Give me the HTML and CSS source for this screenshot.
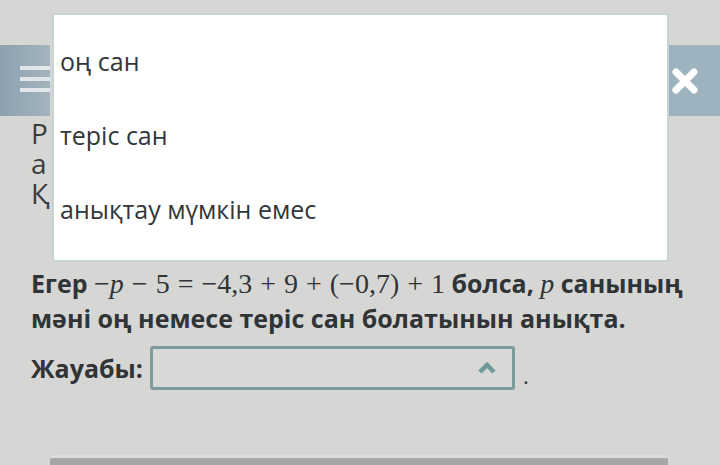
FILE: index.html
```html
<!DOCTYPE html>
<html>
<head>
    <title>Тапсырма</title>
    <meta charset="utf-8">
    <link rel="stylesheet" href="styles.css">
</head>
<body>
    <div class="page">
        <div class="topbar">
            <div class="menu-btn">
                <span></span>
                <span></span>
                <span></span>
            </div>
            <div class="close-btn">
                <svg width="28" height="28" viewBox="0 0 28 28">
                    <path d="M5 5 L23 23 M23 5 L5 23" stroke="#ffffff" stroke-width="7" stroke-linecap="round"/>
                </svg>
            </div>
        </div>

        <p class="intro">Рационал сандарға<br>амалдар қолдану<br>Қажетті нұсқаны</p>

        <p class="question">
            Егер <span class="math">−<i>p</i> − 5 = −4,3 + 9 + (−0,7) + 1</span> болса, <span class="math"><i>p</i></span> санының<br>
            мәні оң немесе теріс сан болатынын анықта.
        </p>

        <div class="answer">
            <label>Жауабы:</label>
            <div class="select">
                <svg class="chevron" width="18" height="14" viewBox="0 0 18 14">
                    <path d="M2 11 L9 4 L16 11" fill="none" stroke="#6e9899" stroke-width="4.5"/>
                </svg>
            </div>
            <span class="dot">.</span>
        </div>

        <div class="next-bar"></div>

        <!-- ашылған тізім -->
        <ul class="dropdown">
            <li>оң сан</li>
            <li>теріс сан</li>
            <li>анықтау мүмкін емес</li>
        </ul>
    </div>
</body>
</html>
```

FILE: styles.css
```css
body {
    margin: 0;
    background: #d6d7d5;
    font-family: "Open Sans", "Noto Sans", sans-serif;
    color: #303436;
    overflow: hidden;
}
.page {
    position: relative;
    height: 465px;
    padding-top: 45px;
    box-sizing: border-box;
    overflow: hidden;
}
.topbar {
    display: flex;
    justify-content: space-between;
    height: 71px;
}
.menu-btn {
    width: 50px;
    background: linear-gradient(to right, #8da1af, #a3b4be);
    display: flex;
    flex-direction: column;
    align-items: flex-end;
    padding-top: 21px;
    gap: 7px;
    box-sizing: border-box;
}
.menu-btn span {
    display: block;
    width: 30px;
    height: 4px;
    background: #e2e6e8;
}
.close-btn {
    width: 71px;
    background: #9db3c0;
    border-radius: 6px 0 0 6px;
    display: flex;
    align-items: center;
    justify-content: center;
}
.intro {
    margin: 2px 0 0 31px;
    font-size: 28px;
    line-height: 30px;
    letter-spacing: 4px;
    color: #3a3d3f;
}
.question {
    margin: 58px 0 0 31px;
    font-size: 25px;
    font-weight: bold;
    line-height: 35px;
    color: #303436;
}
.math {
    font-family: "Liberation Serif", "DejaVu Serif", serif;
    font-weight: normal;
    font-size: 28px;
    word-spacing: 1px;
}
.answer {
    display: flex;
    align-items: center;
    margin: 10px 0 0 31px;
    height: 44px;
}
.answer label {
    font-size: 25px;
    font-weight: bold;
    margin-right: 7px;
}
.select {
    width: 365px;
    height: 44px;
    box-sizing: border-box;
    border: 3px solid #7b9c9e;
    border-radius: 3px;
    background: #d8d9d7;
    display: flex;
    align-items: center;
    justify-content: flex-end;
    padding-right: 16px;
}
.dot {
    margin-left: 8px;
    font-size: 22px;
    padding-top: 14px;
}
.next-bar {
    margin: 65px 52px 0 50px;
    height: 8px;
    border-top: 3px solid #dcdcdc;
    background: #a6a6a6;
    border-radius: 4px 4px 0 0;
}
.dropdown {
    position: absolute;
    left: 52px;
    top: 13px;
    width: 617px;
    height: 249px;
    box-sizing: border-box;
    margin: 0;
    padding: 9px 6px 0 6px;
    list-style: none;
    background: #ffffff;
    border: 2px solid #c6d4d2;
    border-radius: 3px;
}
.dropdown li {
    height: 74px;
    line-height: 74px;
    font-size: 25px;
    color: #333638;
}
```
